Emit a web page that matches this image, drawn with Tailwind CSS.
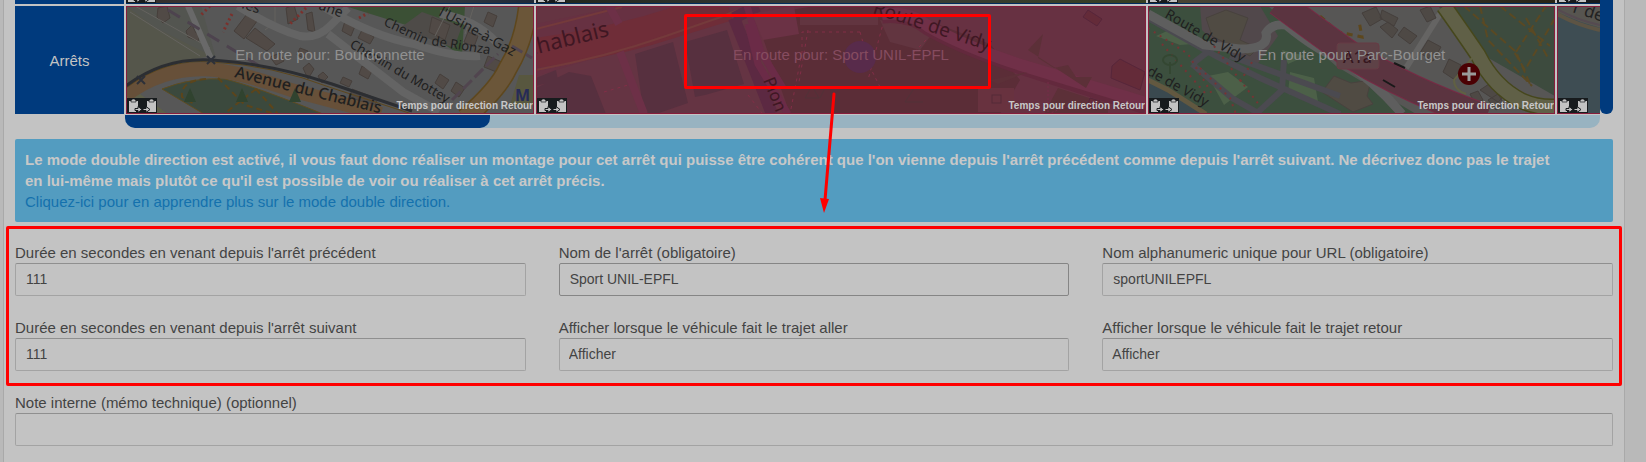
<!DOCTYPE html>
<html lang="fr">
<head>
    <meta charset="UTF-8">
    <meta name="viewport" content="width=device-width, initial-scale=1.0">
    <title>Montage - Arrêts</title>
    <script src="https://cdn.jsdelivr.net/npm/@tailwindcss/browser@4"></script>
</head>
<body class="bg-[#b9b9b9] font-['Liberation_Sans',Arial,sans-serif] text-[15px] leading-[21px] text-[#434343]">

    <!-- Icônes copier / coller, partagées par toutes les étapes -->
    <svg class="hidden" aria-hidden="true">
        <symbol id="clips" viewBox="0 0 30 15">
            <rect width="30" height="15" fill="#171b1d"/>
            <path d="M2 3h9v7H9v4H2zM20 3h9v11h-9z" fill="#c3c3c3"/>
            <path d="M4 2h1V1h3v1h1v2H4zM22 2h1V1h3v1h1v2h-5z" fill="#c3c3c3" stroke="#171b1d" stroke-width=".7"/>
            <path d="M8 10.500h3V8.500l4 3-4 3v-2H8zM16 10.500h3V8.500l4 3-4 3v-2h-3z" fill="#c3c3c3" stroke="#171b1d"/>
        </symbol>
    </svg>

    <main class="relative ml-[3px] mr-[21px] min-h-screen border-x border-[#a9a9a9] bg-[#c3c3c3] px-[11px]">

        <section class="flex">
            <div class="w-[109px] shrink-0 text-center text-[#c3c3c3]">
                <div class="h-1 bg-[#003a7d]"></div>
                <div class="mt-[2px] flex h-[108px] items-center justify-center bg-[#003a7d]">Arrêts</div>
            </div>

            <div class="ml-[2px] min-w-0 flex-1">
                <!-- Bas de la ligne des médias -->
                <div class="flex h-1 gap-[2px] overflow-hidden border-b border-[#002c5c]">
                    <div class="flex w-[408px] shrink-0 items-end bg-linear-to-r from-[#302b28] via-[#4a4a48] to-[#1e2938]"><svg class="h-[15px] w-[30px]"><use href="#clips"/></svg></div>
                    <div class="flex w-[610px] shrink-0 items-end bg-linear-to-r from-[#20261b] via-[#393c3b] to-[#353e20]"><svg class="h-[15px] w-[30px]"><use href="#clips"/></svg></div>
                    <div class="flex w-[407px] shrink-0 items-end bg-linear-to-r from-[#4c4635] via-[#38382f] to-[#292416]"><svg class="h-[15px] w-[30px]"><use href="#clips"/></svg></div>
                    <div class="flex flex-1 items-end bg-[#171b1d]"><svg class="h-[15px] w-[30px]"><use href="#clips"/></svg></div>
                </div>

                <div class="mt-[2px] flex h-[108px] gap-[2px] overflow-hidden">

                    <!-- Bourdonnette -->
                    <article class="relative w-[408px] shrink-0 overflow-hidden border border-[#861d3c] bg-[#575757]">
                        <svg class="absolute inset-0 size-full" viewBox="127 7 406 106" preserveAspectRatio="xMinYMin slice" font-family="Noto Sans, sans-serif" fill="none">
                            <path d="M126 6h24l60 50-30 6-54 32z" fill="#55564b"/>
                            <path d="M126 6h75l15 52-60-30z" fill="#535550"/>
                            <path d="M345 6h120l-3 50-40-26z" fill="#3b5035"/>
                            <path d="M400 28l22-16 40 14-8 22z" fill="#4e4b48"/>
                            <g fill="#514a46" stroke="#463f3b">
                                <path d="M158 8l9-2 3 12-7 5-6-6zM186 31l6-6 4 8 5-2-3 10-10-4zM234 31l16-21 10 7-16 22zM246 38l9-10 20 16-8 7zM286 8l8-3 4 14-10 5zM306 14l6-2 3 20-7-2zM345 21l10 5-4 10-9-5zM362 30l12 7-4 7-12-6zM270 57l10-4 4 8-8 4zM303 68l6-5 5 6-6 10zM318 76l5-4 5 5-6 6zM343 77l9 4-3 6-9-4zM352 89l26 10-4 8-24-10zM300 48l8 3-4 7-7-3zM362 66l10 5-4 8-9-5zM432 17l18 8-5 15-16-8zM468 32l10 4-4 11-10-5zM488 12l9 4-4 11-9-5zM488 56l16 7-5 10-15-6zM440 74l9 6-6 9-8-6zM456 82l9 6-6 9-8-6z"/>
                            </g>
                            <path d="M135 6l75 42M130 12l70 44M450 6l-15 30M474 6l-9 28M275 6v16l-10 8" stroke="#65635f"/>
                            <path d="M188 6l24 55" stroke="#696969" stroke-width="6"/>
                            <path d="M168 10l98 60" stroke="#4d434e" stroke-width="3" stroke-dasharray="14 9"/>
                            <path d="M238 6q35 22 62 30 17 3 30-10L348 8M328 34l75 58 36 20M322 6q50 30 92 38 40 14 66 12M440 14q35 5 56 28" stroke="#646464" stroke-width="8"/>
                            <path d="M232 14l-9 18M210 6l-9 9M306 8l-16 16M359 18l9-5" stroke="#7b302c" stroke-width="3" stroke-dasharray="2 3"/>
                            <path d="M126 84l42 30h-42z" fill="#5d5f49"/>
                            <path d="M162 89q30-12 63-10 32 8 98 35H204z" fill="#3b493d" stroke="#5e4c20"/>
                            <path d="M126 95q40-30 90-25 30 4 75 20l90 24" stroke="#675039" stroke-width="14"/>
                            <path d="M126 88q40-30 86-26 60 3 120 26l80 26" stroke="#5d471d"/>
                            <path d="M126 86q38-29 86-26 60 4 120 24l80 27" stroke="#2c2e32" stroke-width="3"/>
                            <path d="M137 76l8 8m0-8l-8 8M207 56l8 8m0-8l-8 8" stroke="#2d3038" stroke-width="2"/>
                            <path d="M218 78l27 27 30 9M256 89l-32 25M256 89l22 25M206 79q-26 2-24 18l14 8" stroke="#5c451b" stroke-width="2" stroke-dasharray="6 4"/>
                            <path d="M190 88l-6 14h12zM242 88l-6 14h12zM295 88l-6 14h12z" fill="#30432f"/>
                            <path d="M528 6q-4 36-20 62-10 22-43 50" stroke="#5e471d" stroke-width="20"/>
                            <path d="M528 6q-4 36-20 62-10 22-43 50" stroke="#6b5639" stroke-width="17"/>
                            <path d="M512 46l20 12M452 100l46-46" stroke="#51454f" stroke-width="3" stroke-dasharray="12 4"/>
                            <path d="M519 75h15v30h-24z" fill="#58573f"/>
                            <g fill="#202020" font-size="14">
                                <text transform="translate(241 8) rotate(18)">les</text>
                                <text transform="translate(318 9) rotate(20)">ane</text>
                                <text transform="translate(383 25) rotate(25)" font-size="13">Chemin</text>
                                <text transform="translate(431 45) rotate(9)" font-size="13">de Rionza</text>
                                <text transform="translate(349 47) rotate(30)" font-size="13">Chemin du Mottey</text>
                                <text transform="translate(438 15) rotate(29)">l'Usine-à-Gaz</text>
                                <text transform="translate(234 77) rotate(14)" font-size="16" font-weight="500">Avenue du Chablais</text>
                            </g>
                            <text x="515" y="101" fill="#262b57" font-size="16" font-weight="700">M</text>
                        </svg>
                        <p class="relative flex h-full items-center justify-center pb-3 text-[#919191]">En route pour: Bourdonnette</p>
                        <svg class="absolute bottom-0 left-0 h-[15px] w-[30px]"><use href="#clips"/></svg>
                        <span class="absolute right-0 bottom-0 text-[10px] leading-[14px] font-bold whitespace-nowrap text-[#c8c8c8]">Temps pour direction Retour</span>
                    </article>

                    <!-- Sport UNIL-EPFL, étape sélectionnée -->
                    <article class="relative w-[610px] shrink-0 overflow-hidden border border-[#861d3c] bg-[#673142]">
                        <svg class="absolute inset-0 size-full" viewBox="537 7 608 106" preserveAspectRatio="xMinYMin slice" font-family="Noto Sans, sans-serif" fill="none">
                            <path d="M536 76l212-64 18 50 10 52H536z" fill="#653443"/>
                            <path d="M755 16l60-10h75l100 38 30 36-20 34H790z" fill="#5b2d37"/>
                            <path d="M800 17h78v8h-78zM880 20l55 10-15 20-30-8z" fill="#623540"/>
                            <path d="M536 6h86l-86 18z" fill="#653442"/>
                            <path d="M536 53q60-8 110-22l82-25" stroke="#6f2d38" stroke-width="30"/>
                            <path d="M536 70q70-13 130-34l52-18 20-8M536 29l86-22" stroke="#743a3b" stroke-width="2"/>
                            <g fill="#57303f">
                                <path d="M635 54l38-12 15 61-32 11h-12zM685 42l42-12 17 54-39 11-10 2zM536 88l33-16 22 4 15 38h-70zM536 78l20-8 2 10-22 6z"/>
                            </g>
                            <path d="M620 52l24 62M609 6l10 18" stroke="#6d3047" stroke-width="8"/>
                            <path d="M734 18l20 50 18 46M734 18l24-12" stroke="#5c2942" stroke-width="12"/>
                            <path d="M748 24l10 40 30 50M747 6l14 46 22 36" stroke="#6b2b47" stroke-width="7"/>
                            <path d="M752 14l42-8 5 28-36 6z" fill="#6b3245"/>
                            <path d="M860 32h-58v20l-12 62M860 32l10 35 10 20M884 20l-16 60M936 30l-26 26M604 92l24-7M748 95l14 18M808 30l-9 52" stroke="#822e47" stroke-dasharray="3 4"/>
                            <circle cx="860" cy="57" r="16" fill="#582b4b"/>
                            <path d="M882 16q28-3 46 12 35 20 93 39l125 40" stroke="#63293d" stroke-width="15"/>
                            <path d="M882 14q28-3 46 12 35 20 93 39l125 38" stroke="#703048" stroke-width="12"/>
                            <path d="M1028 50l15-16-5 24 16 10 14-3 8 12 16 0-6 11zM990 80l38-8-30 12zM1044 114l14-26 50 16v10z" fill="#5c3038"/>
                            <path d="M1083 17l5-7 14 9-5 7zM1112 66l8-7 25 13-5 18-29-12zM1090 98l10 3-3 9-10-3z" fill="#642b39" stroke="#57263a"/>
                            <path d="M812 86l-7 12h14zM915 87l-10 15h18M824 90l-4 8" stroke="#523238"/>
                            <rect x="978" y="88" width="36" height="24" fill="#68323f"/>
                            <rect x="992" y="95" width="9" height="8" stroke="#552a38"/>
                            <path d="M1048 82v32l20-8" stroke="#762c48" stroke-dasharray="2 2"/>
                            <g fill="#3f1723">
                                <text transform="translate(525 57) rotate(-14)" font-size="22">Chablais</text>
                                <text transform="translate(872 13) rotate(18)" font-size="19">Route de Vidy</text>
                                <text transform="translate(763 80) rotate(68)" font-size="17">Pion</text>
                            </g>
                        </svg>
                        <p class="relative flex h-full items-center justify-center pb-3 text-[#864c60]">En route pour: Sport UNIL-EPFL</p>
                        <svg class="absolute bottom-0 left-0 h-[15px] w-[30px]"><use href="#clips"/></svg>
                        <span class="absolute right-0 bottom-0 text-[10px] leading-[14px] font-bold whitespace-nowrap text-[#c8c8c8]">Temps pour direction Retour</span>
                        <div class="absolute top-[7px] left-[147px] h-[75px] w-[307px] rounded-[2px] border-3 border-[#ff0000]"></div>
                    </article>

                    <!-- Parc-Bourget -->
                    <article class="relative w-[407px] shrink-0 overflow-hidden border border-[#861d3c] bg-[#575655]">
                        <svg class="absolute inset-0 size-full" viewBox="1149 7 405 106" preserveAspectRatio="xMinYMin slice" font-family="Noto Sans, sans-serif" fill="none">
                            <path d="M1148 6h120l68 60 80 48h-268z" fill="#3c4f3e"/>
                            <path d="M1148 76l57 38h-57z" fill="#3a494f"/>
                            <path d="M1148 80l20 10 38 24" stroke="#625840" stroke-width="5"/>
                            <path d="M1200 6h60l18 30-22 30-34-16-20-20z" fill="#51484b"/>
                            <path d="M1206 18l20-8 22 8-8 22 18 8-8 8-38-20zM1322 92l12-16 17 7 20-3-4 16 6 8-20 8z" fill="#504b43" stroke="#48423e"/>
                            <path d="M1156 36l20-9 28 16-24 2zM1282 50l24 6-18 8zM1208 76l20-4 20 15-24 18zM1290 72l24 6 4 24-30-8z" fill="#4c6048"/>
                            <path d="M1148 18l68 38 44 22 80 36M1192 64l26-20M1192 64l40 34 28 16M1284 60l-2 30-26 24M1230 56l110 40" stroke="#4b4a50" stroke-width="6"/>
                            <path d="M1148 14l56 31 36 4q30 0 26-16 6-10 20-8 34 28 56 34 36 26 60 55" stroke="#5e5e5e" stroke-width="9"/>
                            <path d="M1148 28l40 26 24 40M1162 44l44 50M1200 68l30 30 6 16M1252 62l-12 20M1214 46l46 60M1440 98l60 10" stroke="#753434" stroke-dasharray="2 5" stroke-width="2"/>
                            <path d="M1438 6h117v90l-70-40z" fill="#3d4b3e"/>
                            <path d="M1464 6l52 46 14 32M1555 18l-30 52-12-20M1500 6l50 40M1480 6l8 34 44 46M1516 52l30-46M1526 18l22 40" stroke="#5a4923" stroke-width="2" stroke-dasharray="8 4"/>
                            <path d="M1440 14l-34 54" stroke="#656463" stroke-width="6"/>
                            <g fill="#4e4945" stroke="#453f3c">
                                <path d="M1362 13l14-6 6 12-12 7zM1398 35l6-8 13 9-7 8zM1382 10l16 8-4 8-14-8zM1420 53l8-13 13 7-8 14zM1443 72l6-13 12 6-6 15zM1380 27l8-5 10 8-6 8zM1460 39l8-5 12 14-9 6zM1480 90l12-8 14 12-8 8zM1420 10l10-4 6 12-9 4zM1488 100l10-6 6 10-8 6zM1470 94l8-3 5 9-8 4z"/>
                            </g>
                            <path d="M1320 16l18 16 24 5-3-16" stroke="#5d471d" stroke-width="3" stroke-dasharray="6 5"/>
                            <path d="M1444 6q24 34 34 49 16 32 44 46 16 7 34 6" stroke="#46471c" stroke-width="17"/>
                            <path d="M1444 6q24 34 34 49 16 32 44 46 16 7 34 6" stroke="#606047" stroke-width="14"/>
                            <path d="M1472 58l-18 22q0 10 12 14" stroke="#606043" stroke-width="2"/>
                            <path d="M1278 2q40 30 74 54 56 34 134 62" stroke="#762b45" stroke-width="28"/>
                            <path d="M1278 2q40 30 74 54 56 34 134 62" stroke="#5b3440" stroke-width="26"/>
                            <path d="M1383 80l12 7M1394 63l11 5" stroke="#191919" stroke-width="2"/>
                            <rect x="1337" y="43" width="42" height="26" rx="3" fill="#5e4247" stroke="#673b45"/>
                            <text x="1343" y="63" fill="#36171f" font-size="16" font-weight="500">A1a</text>
                            <circle cx="1469" cy="74" r="11" fill="#4b0003"/>
                            <path d="M1469 67v14M1462 74h14" stroke="#9a9a9a" stroke-width="3"/>
                            <g fill="#1f2020" font-size="14">
                                <text transform="translate(1164 17) rotate(30)">Route de Vidy</text>
                                <text transform="translate(1146 74) rotate(29)">de de Vidy</text>
                            </g>
                            <path d="M1163 60a7 5 0 1 1 14 0 7 5 0 1 1-14 0M1170 62v12" stroke="#344732" stroke-width="2"/>
                        </svg>
                        <p class="relative flex h-full items-center justify-center pb-3 text-[#919191]">En route pour: Parc-Bourget</p>
                        <svg class="absolute bottom-0 left-0 h-[15px] w-[30px]"><use href="#clips"/></svg>
                        <span class="absolute right-0 bottom-0 text-[10px] leading-[14px] font-bold whitespace-nowrap text-[#c8c8c8]">Temps pour direction Retour</span>
                    </article>

                    <!-- Étape suivante, coupée par le défilement -->
                    <article class="relative flex-1 overflow-hidden border border-r-0 border-[#861d3c] bg-[#3e4d53]">
                        <svg class="absolute inset-0 size-full" viewBox="1558 7 42 106" preserveAspectRatio="xMinYMin slice" font-family="Noto Sans, sans-serif" fill="none">
                            <path d="M1557 12l24 10 20 6V6h-44z" fill="#575550"/>
                            <path d="M1557 14q20 11 43 16" stroke="#5d5444" stroke-width="4"/>
                            <path d="M1557 9q20 11 43 16" stroke="#554a51" stroke-width="2"/>
                            <text transform="translate(1572 12) rotate(18)" fill="#222" font-size="17">r de</text>
                        </svg>
                        <svg class="absolute bottom-0 left-0 h-[15px] w-[30px]"><use href="#clips"/></svg>
                    </article>
                </div>

                <!-- Barre de défilement horizontale -->
                <div class="-ml-px mt-px h-[13px] rounded-b-[10px] bg-[#98b3c1]">
                    <div class="h-full w-[365px] rounded-b-[10px] bg-[#003a7d]"></div>
                </div>
            </div>

            <div class="h-[114px] w-[13px] shrink-0 rounded-b-[6px] bg-[#003a7d]"></div>
        </section>

        <section class="mt-[11px] rounded-[2px] bg-[#539cc0] p-[10px]">
            <p class="font-bold text-[#c8c8c8]">Le mode double direction est activé, il vous faut donc réaliser un montage pour cet arrêt qui puisse être cohérent que l'on vienne depuis l'arrêt précédent comme depuis l'arrêt suivant. Ne décrivez donc pas le trajet <span class="whitespace-nowrap">en lui-même</span> mais plutôt ce qu'il est possible de voir ou réaliser à cet arrêt précis.</p>
            <a href="#" class="text-[#1471ad]">Cliquez-ici pour en apprendre plus sur le mode double direction.</a>
        </section>

        <form class="mt-5">
            <div class="relative grid grid-cols-3 gap-x-[33px] gap-y-[21px]">
                <div>
                    <label for="duree-precedent" class="block">Durée en secondes en venant depuis l'arrêt précédent</label>
                    <input id="duree-precedent" type="text" value="111" class="block h-[33px] w-full rounded-[2px] border border-[#a3a3a3] border-t-[#8f8f8f] px-[10px] pb-[2px] text-[14px]">
                </div>
                <div>
                    <label for="nom" class="block">Nom de l'arrêt (obligatoire)</label>
                    <input id="nom" type="text" value="Sport UNIL-EPFL" class="block h-[33px] w-full rounded-[2px] border border-[#858585] px-[10px] pb-[2px] text-[14px]">
                </div>
                <div>
                    <label for="nom-url" class="block">Nom alphanumeric unique pour URL (obligatoire)</label>
                    <input id="nom-url" type="text" value="sportUNILEPFL" class="block h-[33px] w-full rounded-[2px] border border-[#a3a3a3] border-t-[#8f8f8f] px-[10px] pb-[2px] text-[14px]">
                </div>
                <div>
                    <label for="duree-suivant" class="block">Durée en secondes en venant depuis l'arrêt suivant</label>
                    <input id="duree-suivant" type="text" value="111" class="block h-[33px] w-full rounded-[2px] border border-[#a3a3a3] border-t-[#8f8f8f] px-[10px] pb-[2px] text-[14px]">
                </div>
                <div>
                    <label for="aller" class="block">Afficher lorsque le véhicule fait le trajet aller</label>
                    <select id="aller" class="block h-[33px] w-full appearance-none rounded-[2px] border border-[#a3a3a3] border-t-[#8f8f8f] px-[9px] text-[14px]">
                        <option>Afficher</option>
                    </select>
                </div>
                <div>
                    <label for="retour" class="block">Afficher lorsque le véhicule fait le trajet retour</label>
                    <select id="retour" class="block h-[33px] w-full appearance-none rounded-[2px] border border-[#a3a3a3] border-t-[#8f8f8f] px-[9px] text-[14px]">
                        <option>Afficher</option>
                    </select>
                </div>
                <div class="pointer-events-none absolute -inset-x-[9px] -top-4 -bottom-[15px] rounded-[2px] border-3 border-[#ff0000]"></div>
            </div>
            <div class="mt-[21px]">
                <label for="note" class="block">Note interne (mémo technique) (optionnel)</label>
                <input id="note" type="text" class="block h-[33px] w-full rounded-[2px] border border-[#a3a3a3] border-t-[#8f8f8f] px-[10px] pb-[2px] text-[14px]">
            </div>
        </form>

        <!-- Flèche de l'étape vers le formulaire -->
        <svg class="pointer-events-none absolute top-[92px] left-[816px] h-[122px] w-[18px]" viewBox="0 0 18 122">
            <path d="M14 2L5 108" stroke="#ff0000" stroke-width="3" stroke-linecap="round"/>
            <path d="M0 106l9 1-5 14z" fill="#ff0000"/>
        </svg>
    </main>

</body>
</html>
